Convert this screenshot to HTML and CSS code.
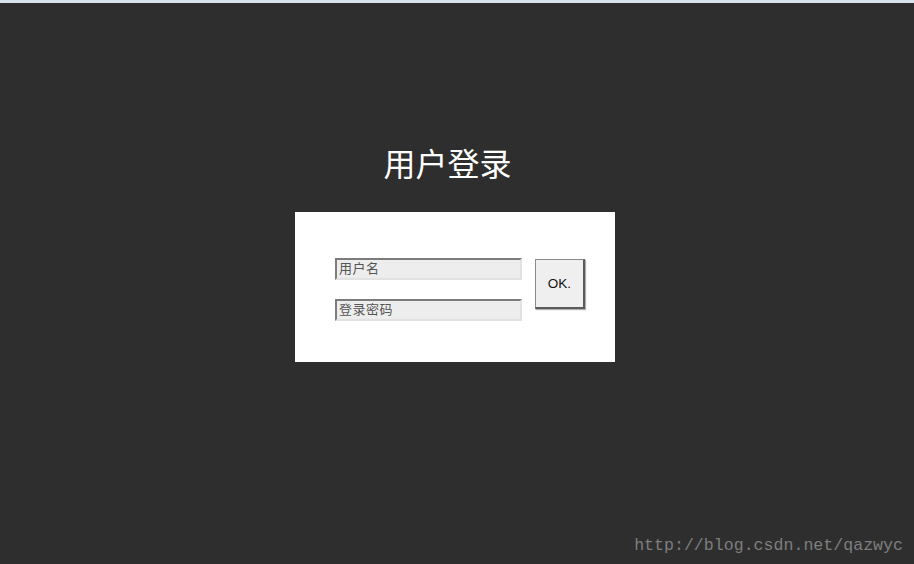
FILE: index.html
```html
<!DOCTYPE html>
<html lang="zh-CN">
<head>
<meta charset="utf-8">
<title>用户登录</title>
<link rel="stylesheet" href="styles.css">
</head>
<body>
<main class="wrap">
  <h1 class="title">用户登录</h1>
  <form class="panel">
    <div class="fields">
      <input class="field" type="text" placeholder="用户名">
      <input class="field" type="password" placeholder="登录密码">
    </div>
    <button class="ok" type="button">OK.</button>
  </form>
</main>
<div class="watermark">http://blog.csdn.net/qazwyc</div>
</body>
</html>
```
FILE: styles.css
```css
html, body {
  margin: 0;
  padding: 0;
}
body {
  background: #2e2e2e;
  border-top: 3px solid #d9e3ef;
  min-height: 100vh;
  box-sizing: border-box;
  position: relative;
  font-family: "Liberation Sans", "Noto Sans CJK SC", sans-serif;
}
.wrap {
  width: 320px;
  margin-left: calc(50% - 162px);
  padding-top: 146px;
}
.title {
  margin: 0;
  padding-right: 15px;
  text-align: center;
  color: #ffffff;
  font-family: "Liberation Serif", "Noto Sans CJK SC", serif;
  font-weight: normal;
  font-size: 32px;
  line-height: 32px;
  height: 32px;
}
.panel {
  margin-top: 31px;
  background: #ffffff;
  height: 150px;
  box-sizing: border-box;
  padding: 46px 0 0 40px;
  display: flex;
  align-items: flex-start;
}
.fields {
  display: flex;
  flex-direction: column;
  gap: 19px;
}
.field {
  width: 187px;
  height: 22px;
  box-sizing: border-box;
  margin: 0;
  padding: 0 2px 3px 2px;
  background: #ededed;
  border-style: solid;
  border-width: 2px;
  border-color: #7c7c7c #e2e2e2 #e2e2e2 #7c7c7c;
  font-family: "Noto Sans CJK SC", sans-serif;
  font-size: 13px;
  letter-spacing: 0.5px;
  color: #333;
  outline: none;
}
.field::placeholder {
  color: #555555;
}
.ok {
  margin: 1px 0 0 13px;
  width: 50px;
  height: 50px;
  box-sizing: border-box;
  padding: 0;
  background: #efefef;
  border-style: solid;
  border-width: 1px 2px 2px 1px;
  border-color: #8a8a8a #5a5a5a #5a5a5a #8a8a8a;
  box-shadow: 1px 1px 1px #b0b0b0;
  font-family: "Liberation Sans", sans-serif;
  font-size: 13.5px;
  color: #111;
  cursor: pointer;
}
.watermark {
  position: absolute;
  right: 11px;
  bottom: 8px;
  font-family: "Liberation Mono", monospace;
  font-size: 16.6px;
  line-height: 20px;
  color: #7e7e7e;
  letter-spacing: 0;
}
```
